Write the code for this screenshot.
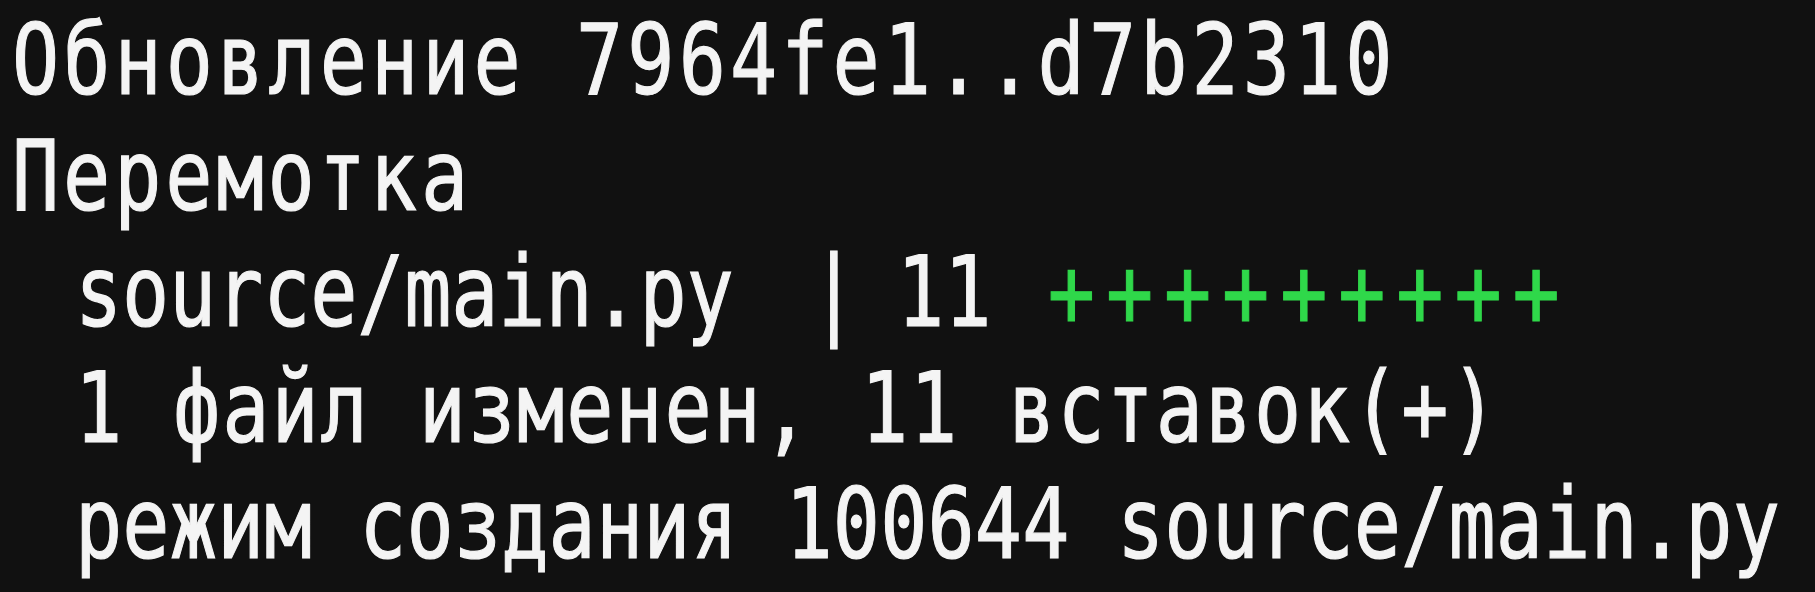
import React from 'react';

const Line: React.FC<{ className?: string; children: React.ReactNode }> = ({ className = '', children }) => (
  <div className="h-[116px] leading-[116px] whitespace-pre">
    <span className={`inline-block origin-left scale-x-[0.8] ${className}`}>{children}</span>
  </div>
);

export default function App() {
  return (
    <div className="h-screen w-screen overflow-hidden bg-[#111111] text-[#f4f4f4] font-['DejaVu_Sans_Mono',monospace] text-[98px] [-webkit-text-stroke:1.2px_currentColor] pt-[2px] pl-[12px]">
      <Line className="tracking-[5.1px]">Обновление 7964fe1..d7b2310</Line>
      <Line className="tracking-[4.9px]">Перемотка</Line>
      <Line className="ml-[63px] tracking-[-0.2px]">
        source/main.py<span className="ml-[37px]"> | </span>
        <span className="-ml-[9px]">11 </span>
        <span className="ml-[12px] text-[#2fd84a] tracking-[13.6px]">+++++++++</span>
      </Line>
      <Line className="ml-[63px] tracking-[2.4px]">1 файл изменен, 11 вставок(+)</Line>
      <Line className="ml-[63px] tracking-[0.2px]">режим создания 100644 source/main.py</Line>
    </div>
  );
}
